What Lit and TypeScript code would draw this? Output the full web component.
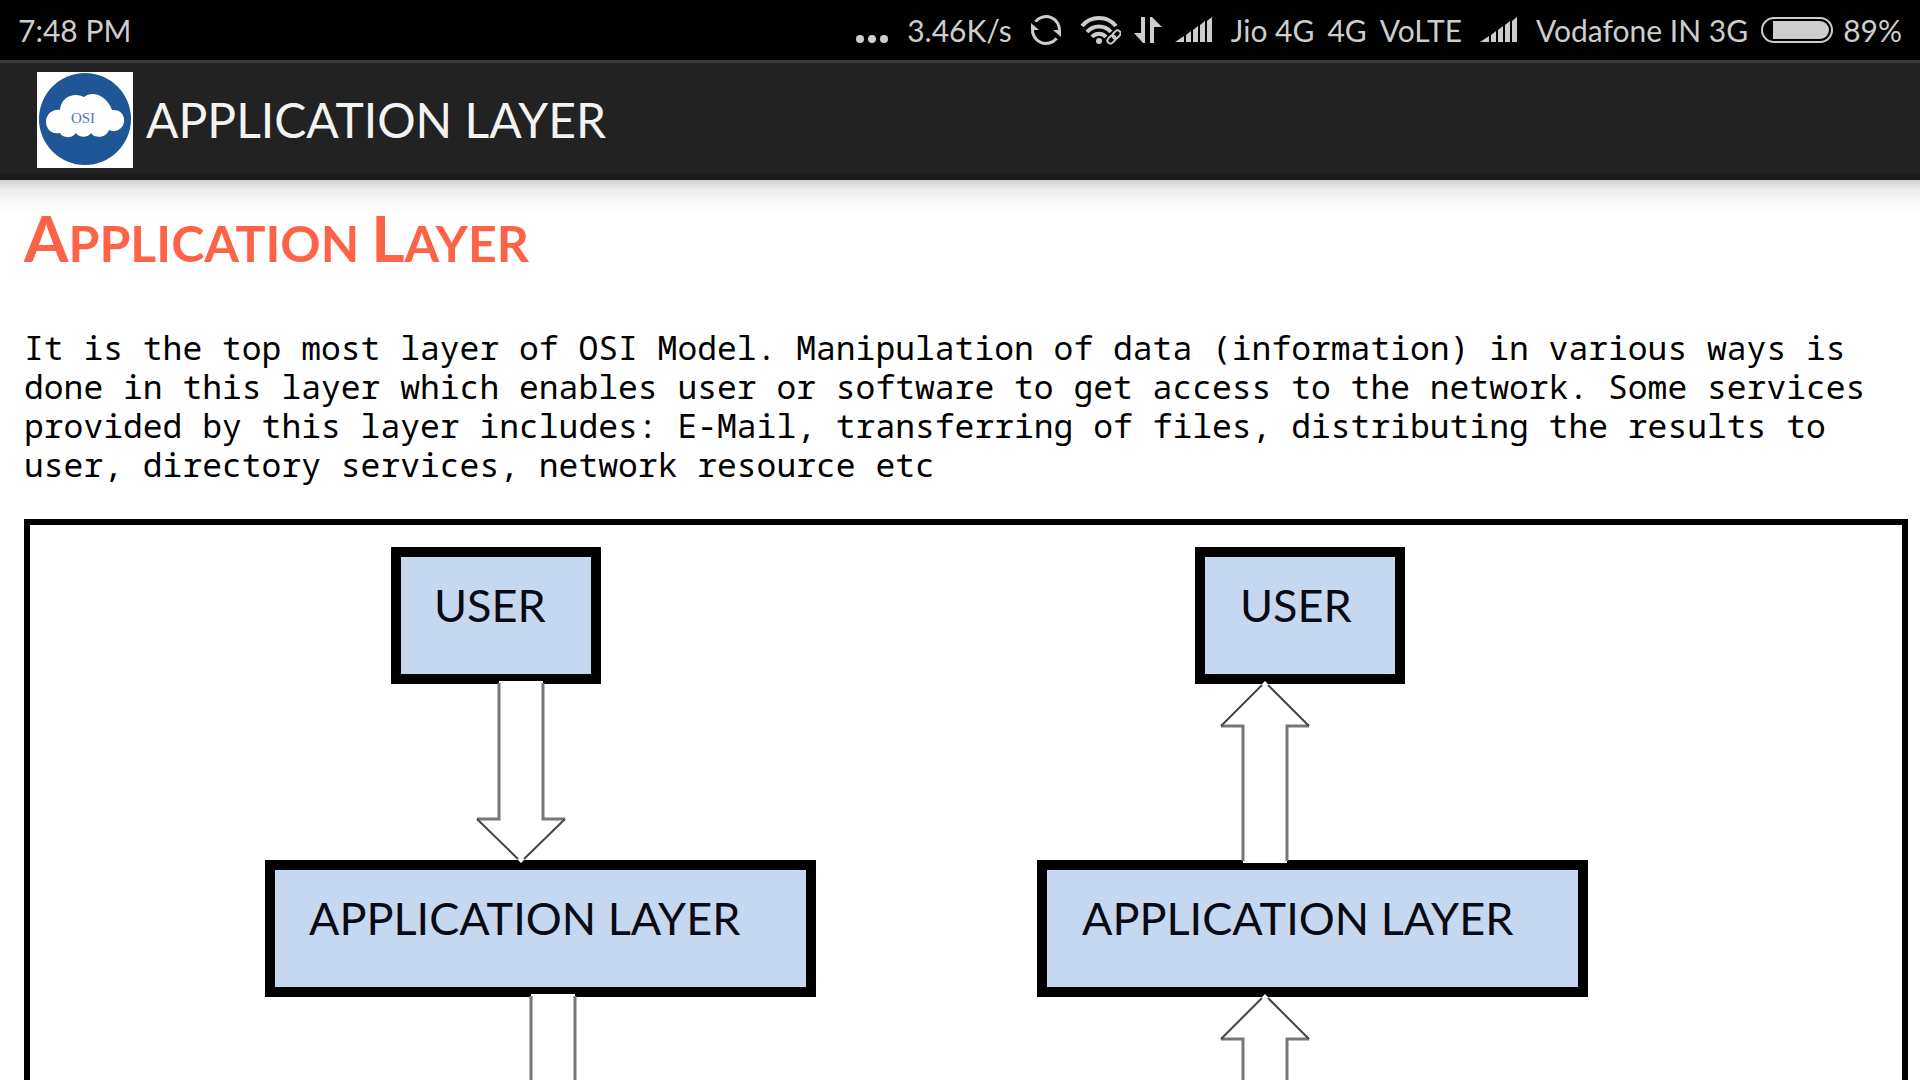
import { LitElement, html, css, svg } from "lit";
import { customElement } from "lit/decorators.js";

const signal = html`<svg class="icon" width="38" height="26" viewBox="0 0 38 26" aria-hidden="true">
  <path d="M0 25 L9 19 V25 Z M11 18 L16 14 V25 H11 Z M18 13 L23 9 V25 H18 Z M25 8 L30 4 V25 H25 Z M32 4 L37 0 V25 H32 Z" />
</svg>`;

@customElement("status-bar")
class StatusBar extends LitElement {
  static styles = css`
    :host {
      display: flex;
      align-items: center;
      height: 60px;
      padding: 0 18px;
      background: #000;
      color: #cdcdcd;
      font: 30px/60px Lato, "Open Sans", sans-serif;
      white-space: nowrap;
    }
    .clock {
      flex: 1;
    }
    .tray {
      display: flex;
      align-items: center;
      gap: 18px;
    }
    .group {
      display: flex;
      align-items: center;
      gap: 13px;
    }
    .pair {
      display: flex;
      align-items: center;
      gap: 10px;
    }
    .icon {
      display: block;
      fill: #cdcdcd;
    }
    .line {
      fill: none;
      stroke: #cdcdcd;
      stroke-width: 3;
    }
    .wave {
      fill: none;
      stroke: #cdcdcd;
      stroke-width: 4;
    }
    .case {
      fill: none;
      stroke: #cdcdcd;
      stroke-width: 2;
    }
    .halo {
      fill: none;
      stroke: #000;
      stroke-width: 5;
    }
  `;

  render() {
    return html`
      <span class="clock">7:48 PM</span>
      <div class="tray">
        <svg class="icon" width="34" height="26" viewBox="0 0 34 26" aria-hidden="true">
          <circle cx="5" cy="22" r="4" /><circle cx="17" cy="22" r="4" /><circle cx="29" cy="22" r="4" />
        </svg>
        <span>3.46K/s</span>
        <svg class="icon" width="32" height="32" viewBox="0 0 32 32" aria-hidden="true">
          <path class="line" d="M5.4 7.7 A13.5 13.5 0 0 1 29.4 18" />
          <path class="line" d="M26.6 24.3 A13.5 13.5 0 0 1 2.6 14" />
          <path d="M31 16 V23 L23 16 Z M1 16 V9 L9 16 Z" />
        </svg>
        <div class="group">
          <svg class="icon" width="41" height="30" viewBox="0 0 41 30" aria-hidden="true">
            <path class="wave" d="M2 11 A22 22 0 0 1 36 11 M7 17 A16 16 0 0 1 31 17 M12 22 A9 9 0 0 1 26 22" />
            <circle cx="19" cy="26" r="3" />
            <g transform="rotate(-45 34 22)">
              <rect class="halo" x="26" y="19" width="16" height="6" rx="3" />
              <rect class="case" x="26" y="19" width="9" height="6" rx="3" />
              <rect class="case" x="33" y="19" width="9" height="6" rx="3" />
            </g>
          </svg>
          <svg class="icon" width="28" height="26" viewBox="0 0 28 26" aria-hidden="true">
            <path d="M7 0 H11 V26 H9 L0 16 H7 Z M16 26 V0 H18 L28 10 H20 V26 Z" />
          </svg>
          ${signal}
        </div>
        <div class="group">
          <span>Jio 4G</span>
          <span>4G</span>
          <span>VoLTE</span>
        </div>
        ${signal}
        <div class="group">
          <span>Vodafone IN 3G</span>
          <div class="pair">
            <svg class="icon" width="72" height="26" viewBox="0 0 72 26" aria-hidden="true">
              <rect class="case" x="1" y="1" width="70" height="24" rx="12" />
              <path d="M12 4 H59 A9 9 0 0 1 59 22 H12 Z" />
            </svg>
            <span>89%</span>
          </div>
        </div>
      </div>
    `;
  }
}

@customElement("title-bar")
class TitleBar extends LitElement {
  static styles = css`
    :host {
      display: flex;
      align-items: center;
      gap: 13px;
      box-sizing: border-box;
      height: 120px;
      padding: 3px 37px 0;
      border-top: 3px solid #3a3a3a;
      border-bottom: 6px solid #1b1b1b;
      background: #222;
      color: #f3f3f3;
    }
    .logo {
      display: block;
    }
    .mark {
      font: 15px "Liberation Serif", serif;
      fill: #4a7ab5;
    }
    .name {
      font: 48px/56px Lato, "Open Sans", sans-serif;
    }
  `;

  render() {
    return html`
      <svg class="logo" width="96" height="96" viewBox="0 0 96 96" role="img" aria-label="OSI">
        <rect width="96" height="96" fill="#fff" />
        <circle cx="48" cy="47" r="46" fill="#1f5796" />
        <path
          fill="#fff"
          d="M23 38 C24 24 38 20 47 25 C56 18 70 24 75 38 C84 37 88 44 87 50 C86 58 77 61 72 58 C69 66 58 67 54 61 C51 66 42 66 39 61 C35 67 25 66 23 61 C14 63 9 56 9 50 C9 42 16 37 23 38 Z"
        />
        <text class="mark" x="46" y="51" text-anchor="middle">OSI</text>
      </svg>
      <span class="name">APPLICATION LAYER</span>
    `;
  }
}

interface Box {
  x: number;
  y: number;
  width: number;
  label: string;
  labelX: number;
}

const boxes: Box[] = [
  { x: 361, y: 22, width: 210, label: "USER", labelX: 404 },
  { x: 1165, y: 22, width: 210, label: "USER", labelX: 1210 },
  { x: 235, y: 335, width: 551, label: "APPLICATION LAYER", labelX: 279 },
  { x: 1007, y: 335, width: 551, label: "APPLICATION LAYER", labelX: 1052 },
];

@customElement("layer-diagram")
class LayerDiagram extends LitElement {
  static styles = css`
    :host {
      display: block;
      border: 6px solid #000;
      background: #fff;
    }
    .canvas {
      display: block;
      width: 100%;
    }
    .box {
      fill: #c6d8ef;
      stroke: #000;
      stroke-width: 10;
    }
    .label {
      font: 45px Lato, "Open Sans", sans-serif;
      fill: #0a0a14;
    }
    .fill {
      fill: #fff;
    }
    .edge {
      fill: none;
      stroke: #777;
      stroke-width: 3;
    }
    .tip {
      fill: none;
      stroke: #444;
      stroke-width: 2;
    }
  `;

  private down(x: number, top: number, tip: number) {
    const neck = tip - 44;
    return svg`
      <path class="fill" d="M${x - 22} ${top} H${x + 22} V${neck} H${x + 44} L${x} ${tip} L${x - 44} ${neck} H${x - 22} Z" />
      <path class="edge" d="M${x - 22} ${top + 2} V${neck} H${x - 44} M${x + 22} ${top + 2} V${neck} H${x + 44}" />
      <path class="tip" d="M${x - 44} ${neck} L${x - 3} ${tip - 4} M${x + 44} ${neck} L${x + 3} ${tip - 4}" />
    `;
  }

  private up(x: number, tip: number, bottom: number) {
    const neck = tip + 45;
    return svg`
      <path class="fill" d="M${x - 22} ${bottom} H${x + 22} V${neck} H${x + 44} L${x} ${tip} L${x - 44} ${neck} H${x - 22} Z" />
      <path class="edge" d="M${x - 22} ${bottom - 2} V${neck} H${x - 44} M${x + 22} ${bottom - 2} V${neck} H${x + 44}" />
      <path class="tip" d="M${x - 44} ${neck} L${x - 3} ${tip + 4} M${x + 44} ${neck} L${x + 3} ${tip + 4}" />
    `;
  }

  render() {
    return html`
      <svg class="canvas" viewBox="0 0 1872 660">
        ${boxes.map(
          (b) => svg`
            <rect class="box" x=${b.x + 5} y=${b.y + 5} width=${b.width - 10} height="127" />
            <text class="label" x=${b.labelX} y=${b.y + 75}>${b.label}</text>
          `
        )}
        ${this.down(491, 156, 338)} ${this.down(523, 469, 651)}
        ${this.up(1235, 156, 338)} ${this.up(1235, 469, 651)}
      </svg>
    `;
  }
}

@customElement("app-root")
class AppRoot extends LitElement {
  static styles = css`
    :host {
      display: flex;
      flex-direction: column;
      height: 100vh;
      overflow: hidden;
      background: #fff;
    }
    .page {
      flex: 1;
      min-height: 0;
      overflow: hidden;
      padding: 18px 12px 0 24px;
      background: linear-gradient(#d2d2d2, #ececec 10px, #fafafa 24px, #fff 36px);
    }
    .heading {
      margin: 0 0 45px;
      color: #ff6347;
      font: bold 50px/80px Lato, "Open Sans", sans-serif;
      text-transform: uppercase;
    }
    .cap {
      font-size: 64px;
    }
    .text {
      margin: 0 0 35px;
      color: #000;
      font: 33px/39px "Noto Sans Mono", "DejaVu Sans Mono", monospace;
    }
  `;

  render() {
    return html`
      <status-bar></status-bar>
      <title-bar></title-bar>
      <main class="page">
        <h1 class="heading"><span class="cap">A</span>pplication <span class="cap">L</span>ayer</h1>
        <p class="text">
          It is the top most layer of OSI Model. Manipulation of data (information) in various ways is done in this
          layer which enables user or software to get access to the network. Some services provided by this layer
          includes: E-Mail, transferring of files, distributing the results to user, directory services, network
          resource etc
        </p>
        <layer-diagram></layer-diagram>
      </main>
    `;
  }
}
